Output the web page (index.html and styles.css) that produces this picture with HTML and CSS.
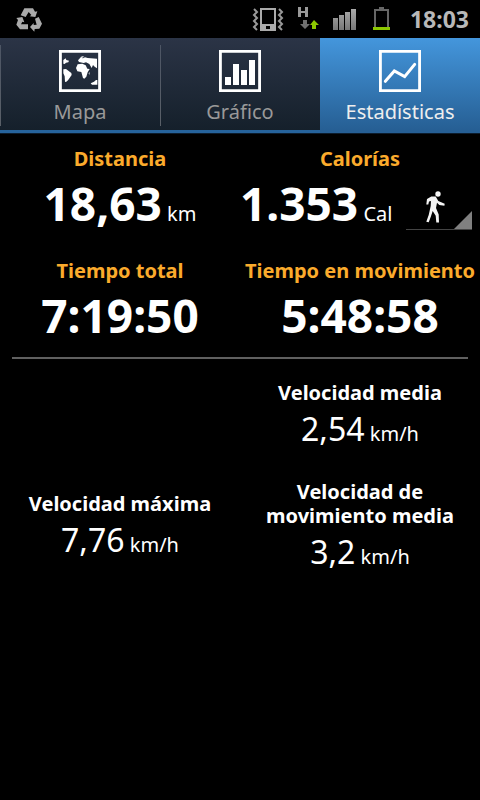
FILE: index.html
```html
<!DOCTYPE html>
<html lang="es">
  <head>
    <meta charset="UTF-8" />
    <meta name="viewport" content="width=device-width, initial-scale=1.0" />
    <title>Estadísticas</title>
    <link rel="stylesheet" href="styles.css">
  </head>
  <body>
    <header class="status-bar">
      <svg width="28" height="26" viewBox="45 20 84 78" fill="#aaaaaa">
        <path d="M62 48L73 27h26l6 10 7-1-6 17-17-2 5-4-8-9-9 15z" />
        <path d="M49 56l18-3 6 16-6-2-4 8h21v15H60L49 76l5-14z" />
        <path d="M105 58l11-5 10 20-8 15-14 1-1 8-13-14 11-12v6l9-1z" />
      </svg>
      <div class="status-icons">
        <svg width="32" height="26" viewBox="0 0 32 26">
          <path d="M9 3h14v20H9z" fill="none" stroke="#aaaaaa" stroke-width="2" />
          <path d="M8 18h16v7H8z" fill="#aaaaaa" />
          <path d="M14 20h4v3h-4z" fill="#000000" />
          <path d="M2 3l3 3-3 3 3 3-3 3 3 3-3 3 3 3M27 3l3 3-3 3 3 3-3 3 3 3-3 3 3 3" fill="none" stroke="#999999" stroke-width="2" />
        </svg>
        <svg width="22" height="26" viewBox="0 0 22 26">
          <path d="M1 1h3v4h4V1h3v10H8V7H4v4H1z" fill="#999999" />
          <path d="M6 14h4v4h3l-5 5-5-5h3z" fill="#707070" />
          <path d="M15 23h4v-4h3l-5-5-4 5h2z" fill="#8cc800" />
        </svg>
        <svg width="26" height="26" viewBox="0 0 26 26" fill="url(#signal)">
          <linearGradient id="signal" x2="0" y2="1">
            <stop offset="0" stop-color="#aaaaaa" />
            <stop offset="1" stop-color="#777777" />
          </linearGradient>
          <path d="M1 12h5v12H1zM7 9h5v15H7zM13 6h5v18h-5zM19 3h5v21h-5z" />
        </svg>
        <svg width="20" height="26" viewBox="0 0 20 26">
          <path d="M4 21V4h13v17" fill="none" stroke="#666666" stroke-width="2" />
          <path d="M8 1h5v2H8z" fill="#666666" />
          <path d="M2 21h17v3H2z" fill="#8cc800" />
        </svg>
        <time class="clock">18:03</time>
      </div>
    </header>

    <nav class="tabs">
      <a class="tab" href="#mapa">
        <svg width="42" height="42" viewBox="0 0 126 126" fill="#ffffff">
          <path class="frame" d="M4 4h118v118H4z" />
          <path d="M13 30l7-5 2 5 8 2-2 5-7 1-4 4-4-1z" />
          <path d="M13 58l8-1 16 12 1 6-11 16-6 5-3-1-1-16-4-9z" />
          <path d="M51 54l5-11 14-2 10 5 5 10 7 1-6 10-4 13-6 6-4-2-5-18-12-2z" />
          <path d="M60 36l-3-5 7-8 8 2 6-3 8 2 28 2v29l-7-5-5-5-4 9-7-12-10-5-7 2z" />
          <path d="M63 22l7-3 6 1-8 4zM89 70l3-4-1 9zM95 100l10-5 6-5h4v14H99z" />
        </svg>
        <span>Mapa</span>
      </a>
      <a class="tab" href="#grafico">
        <svg width="42" height="42" viewBox="0 0 126 126" fill="#ffffff">
          <path class="frame" d="M4 4h118v118H4z" />
          <path d="M18 81h18v24H18zM42 42h18v63H42zM66 60h18v45H66zM90 30h18v75H90z" />
        </svg>
        <span>Gráfico</span>
      </a>
      <a class="tab selected" href="#estadisticas">
        <svg width="42" height="42" viewBox="0 0 126 126">
          <path class="frame" d="M4 4h118v118H4z" />
          <path d="M19 94l27-31 31 17 30-37" fill="none" stroke="#ffffff" stroke-width="9" stroke-linecap="round" />
        </svg>
        <span>Estadísticas</span>
      </a>
    </nav>

    <main>
      <section class="totals">
        <div class="stat">
          <h2>Distancia</h2>
          <p><strong>18,63</strong> km</p>
        </div>
        <div class="stat">
          <h2>Calorías</h2>
          <div class="calories">
            <p><strong>1.353</strong> Cal</p>
            <button class="activity" type="button" aria-label="Actividad">
              <svg width="66" height="42" viewBox="0 6 66 42">
                <circle cx="32" cy="12" r="2.700" fill="#f4f4f4" />
                <path d="M21 17l4.300-2.500h4.400L32.300 19l6.400 2.800-.3 2-5.100-.8-2.300-2.200-1 5.200 2.700 6.500.3 8h-2.700l-.6-6.700-3-4.800-2 6-2 5.300-2.400-.6L22.700 33l2-9 .3-5-2 .5-.7 3h-2z" fill="#f4f4f4" />
                <path d="M66 29v18H48z" fill="#808080" />
                <path d="M0 47h66v1H0z" fill="#444444" />
              </svg>
            </button>
          </div>
        </div>
        <div class="stat">
          <h2>Tiempo total</h2>
          <p><strong>7:19:50</strong></p>
        </div>
        <div class="stat">
          <h2>Tiempo en movimiento</h2>
          <p><strong>5:48:58</strong></p>
        </div>
      </section>

      <hr>

      <section class="speeds">
        <div class="speed average">
          <h3>Velocidad media</h3>
          <p><b>2,54</b> km/h</p>
        </div>
        <div class="speed">
          <h3>Velocidad máxima</h3>
          <p><b>7,76</b> km/h</p>
        </div>
        <div class="speed">
          <h3>Velocidad de movimiento media</h3>
          <p><b>3,2</b> km/h</p>
        </div>
      </section>
    </main>
  </body>
</html>
```
FILE: styles.css
```css
body {
  margin: 0;
  background-color: black;
  color: white;
  font-family: "Noto Sans", "Open Sans", sans-serif;
}

h2,
h3,
p {
  margin: 0;
}

.status-bar {
  display: flex;
  justify-content: space-between;
  align-items: center;
  height: 38px;
  padding: 0 11px 0 15px;
}

.status-icons {
  display: flex;
  align-items: center;
  gap: 13px;
}

.clock {
  color: #b8b8b8;
  font-size: 23px;
  font-weight: 700;
  margin-left: 6px;
}

.tabs {
  display: grid;
  grid-template-columns: repeat(3, 1fr);
  height: 96px;
  box-sizing: border-box;
  border-bottom: 1px solid #0c1c2c;
}

.tab {
  display: flex;
  flex-direction: column;
  align-items: center;
  gap: 6px;
  padding-top: 12px;
  color: #999999;
  font-size: 20px;
  line-height: 28px;
  text-decoration: none;
  border-bottom: 3px solid #26639c;
  background: linear-gradient(#4d5564, #5a6068) 0 7px / 1px 81px no-repeat,
    linear-gradient(#2b3446, #15202b);
}

.tab.selected {
  color: #eeeeee;
  border-bottom-color: #265f94;
  background: linear-gradient(#4496dc, #265f94);
}

.frame {
  fill: none;
  stroke: white;
  stroke-width: 9;
}

.totals,
.speeds {
  display: grid;
  grid-template-columns: repeat(2, 1fr);
  align-items: center;
  text-align: center;
}

.totals {
  padding-top: 12px;
  row-gap: 13px;
}

.stat h2 {
  color: #fbab2c;
  font-size: 20px;
  line-height: 26px;
  white-space: nowrap;
}

.stat p {
  font-size: 20px;
  line-height: 62px;
  white-space: nowrap;
}

.stat strong {
  font-size: 46px;
}

.calories {
  display: flex;
  justify-content: space-between;
  align-items: center;
  padding-right: 8px;
}

.activity {
  padding: 0;
  border: none;
  background: none;
  cursor: pointer;
}

.activity svg {
  display: block;
}

hr {
  height: 2px;
  margin: 0 12px 22px;
  border: none;
  background-color: #606060;
}

.speeds {
  row-gap: 23px;
}

.speed h3 {
  padding: 0 20px;
  font-size: 20px;
  line-height: 24px;
}

.speed p {
  font-size: 20px;
  line-height: 47px;
}

.speed b {
  font-size: 32px;
  font-weight: 400;
}

.average {
  grid-column: 2;
}
```
